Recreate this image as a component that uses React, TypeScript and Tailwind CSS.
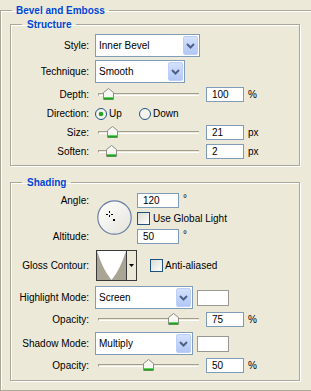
import React from 'react'

const labelCol = 'w-[78px] shrink-0 text-right whitespace-nowrap'

/* ── Small XP-style controls ───────────────────────────────────── */

function Chevron() {
  return (
    <svg width="9" height="6" viewBox="0 0 9 6" aria-hidden="true">
      <path d="M1 1l3.5 3.5L8 1" fill="none" stroke="#4D6185" strokeWidth="2" />
    </svg>
  )
}

function Select({ value, width }: { value: string; width: string }) {
  return (
    <div className={`${width} h-[23px] flex items-stretch border border-[#7F9DB9] bg-white p-[1px]`}>
      <span className="flex-1 flex items-center pl-[2px]">{value}</span>
      <span className="w-[15px] flex items-center justify-center rounded-[2px] border border-[#BCCFF9] bg-gradient-to-b from-[#D4E1FD] to-[#B3C7F6]">
        <Chevron />
      </span>
    </div>
  )
}

function Field({ value, width }: { value: string; width: string }) {
  return (
    <div className={`${width} h-[15px] flex items-center border border-[#7F9DB9] bg-white pl-[5px] leading-none`}>
      {value}
    </div>
  )
}

function Thumb() {
  return (
    <svg width="11" height="12" viewBox="0 0 11 12" aria-hidden="true">
      <path d="M0.5 4.5L5.5 0.5L10.5 4.5V11.5H0.5Z" fill="#F7F7F4" stroke="#8E8D84" />
      <rect x="1" y="9" width="9" height="1" fill="#5FD35F" />
      <rect x="1" y="10" width="9" height="1.5" fill="#21A121" />
    </svg>
  )
}

// thumb = x position of the thumb's centre in page pixels
function Slider({ thumb }: { thumb: number }) {
  return (
    <div className="relative w-[104px] h-[15px] flex items-center pl-[3px]">
      <div className="flex-1 h-[3px] border-t border-l border-[#A19E8F] border-b border-b-white" />
      <span className="absolute top-[1px]" style={{ left: thumb - 95 - 5 }}>
        <Thumb />
      </span>
    </div>
  )
}

function Radio({ checked }: { checked?: boolean }) {
  return (
    <svg width="12" height="12" viewBox="0 0 12 12" aria-hidden="true">
      <circle cx="6" cy="6" r="5.5" fill="#F5F4EF" stroke="#1F5484" />
      {checked && <circle cx="6" cy="6" r="2.3" fill="#24A424" />}
    </svg>
  )
}

function Checkbox() {
  return <span className="w-[13px] h-[13px] border border-[#1C5180] bg-gradient-to-br from-[#DCDBD3] to-white" />
}

function Swatch() {
  return <span className="w-[32px] h-[16px] border border-[#999891] bg-white" />
}

function Dial() {
  return (
    <svg width="35" height="35" viewBox="0 0 35 35" aria-hidden="true">
      <defs>
        <linearGradient id="dialFill" x1="0" y1="0" x2="1" y2="1">
          <stop offset="0" stopColor="#FFFFFF" />
          <stop offset="1" stopColor="#E4E3DA" />
        </linearGradient>
      </defs>
      <circle cx="17.5" cy="17.5" r="16.7" fill="url(#dialFill)" stroke="#6A7FA6" strokeWidth="1.2" />
      <rect x="12" y="11" width="1" height="2" fill="#000" />
      <rect x="12" y="15" width="1" height="2" fill="#000" />
      <rect x="9" y="14" width="2" height="1" fill="#000" />
      <rect x="14" y="14" width="2" height="1" fill="#000" />
      <rect x="16" y="19" width="2" height="2" fill="#000" />
    </svg>
  )
}

function Contour() {
  return (
    <div className="flex h-[31px] w-[41px] border border-[#3A3A3A]">
      <svg width="29" height="29" viewBox="0 0 29 29" aria-hidden="true">
        <rect width="29" height="29" fill="#A9A594" />
        <path d="M0 0Q6 19 14.5 29Q23 19 29 0Z" fill="#FFFFFF" />
      </svg>
      <div className="flex-1 flex items-center justify-center border-l border-[#3A3A3A]">
        <svg width="5" height="3" viewBox="0 0 5 3" aria-hidden="true">
          <path d="M0 0H5L2.5 3Z" fill="#000" />
        </svg>
      </div>
    </div>
  )
}

/* ── Rows ──────────────────────────────────────────────────────── */

function Row({ label, className, children }: { label: string; className: string; children: React.ReactNode }) {
  return (
    <div className={`flex items-center ${className}`}>
      <span className={labelCol}>{label}</span>
      <div className="ml-[6px] flex items-center">{children}</div>
    </div>
  )
}

function SliderRow({ label, thumb, value, unit, className }: {
  label: string; thumb: number; value: string; unit: string; className: string
}) {
  return (
    <Row label={label} className={`h-[15px] ${className}`}>
      <Slider thumb={thumb} />
      <span className="ml-[7px]"><Field value={value} width="w-[38px]" /></span>
      <span className="ml-[4px]">{unit}</span>
    </Row>
  )
}

const groupBox = 'border border-[#ACA899] shadow-[inset_1px_1px_0_#fff,1px_1px_0_#fff]'
const legendCls = 'font-bold text-[#0046D5] leading-[11px]'

export default function App() {
  return (
    <div className="w-[311px] h-[391px] overflow-hidden bg-[#ECE9D8] text-[10px] text-black font-['Liberation_Sans',Arial,sans-serif] pt-[5px]">
      <fieldset className={`w-[320px] pl-[9px] pb-[9px] ${groupBox}`}>
        <legend className={`ml-[2px] px-[4px] ${legendCls}`}>Bevel and Emboss</legend>

        {/* Structure */}
        <fieldset className={`mt-[3px] w-[290px] pb-[6px] ${groupBox}`}>
          <legend className={`ml-[11px] px-[5px] ${legendCls}`}>Structure</legend>
          <Row label="Style:" className="mt-[4px] h-[23px]">
            <Select value="Inner Bevel" width="w-[105px]" />
          </Row>
          <Row label="Technique:" className="mt-[3px] h-[23px]">
            <Select value="Smooth" width="w-[90px]" />
          </Row>
          <SliderRow label="Depth:" thumb={108} value="100" unit="%" className="mt-[4px]" />
          <Row label="Direction:" className="mt-[4px] h-[15px]">
            <span className="w-[44px] flex items-center">
              <Radio checked />
              <span className="ml-[2px]">Up</span>
            </span>
            <Radio />
            <span className="ml-[2px]">Down</span>
          </Row>
          <SliderRow label="Size:" thumb={112} value="21" unit="px" className="mt-[4px]" />
          <SliderRow label="Soften:" thumb={111} value="2" unit="px" className="mt-[4px]" />
        </fieldset>

        {/* Shading */}
        <fieldset className={`mt-[11px] w-[290px] pb-[7px] ${groupBox}`}>
          <legend className={`ml-[11px] px-[5px] ${legendCls}`}>Shading</legend>

          <div className="mt-[5px] flex">
            <div className={`${labelCol} flex flex-col`}>
              <span className="h-[15px] leading-[15px]">Angle:</span>
              <span className="mt-[21px] h-[15px] leading-[15px]">Altitude:</span>
            </div>
            <div className="ml-[8px] mt-[7px]">
              <Dial />
            </div>
            <div className="ml-[5px] flex flex-col">
              <div className="flex items-start">
                <Field value="120" width="w-[42px]" />
                <span className="ml-[4px] leading-[12px]">°</span>
              </div>
              <div className="mt-[4px] h-[13px] flex items-center">
                <Checkbox />
                <span className="ml-[3px]">Use Global Light</span>
              </div>
              <div className="mt-[4px] flex items-start">
                <Field value="50" width="w-[42px]" />
                <span className="ml-[4px] leading-[12px]">°</span>
              </div>
            </div>
          </div>

          <Row label="Gloss Contour:" className="mt-[6px] h-[31px]">
            <span className="ml-[1px]"><Contour /></span>
            <span className="ml-[13px] flex items-center">
              <Checkbox />
              <span className="ml-[2px]">Anti-aliased</span>
            </span>
          </Row>

          <Row label="Highlight Mode:" className="mt-[5px] h-[23px]">
            <Select value="Screen" width="w-[98px]" />
            <span className="ml-[4px] flex"><Swatch /></span>
          </Row>
          <SliderRow label="Opacity:" thumb={173} value="75" unit="%" className="mt-[3px]" />

          <Row label="Shadow Mode:" className="mt-[5px] h-[23px]">
            <Select value="Multiply" width="w-[98px]" />
            <span className="ml-[4px] flex"><Swatch /></span>
          </Row>
          <SliderRow label="Opacity:" thumb={148} value="50" unit="%" className="mt-[3px]" />
        </fieldset>
      </fieldset>
    </div>
  )
}
